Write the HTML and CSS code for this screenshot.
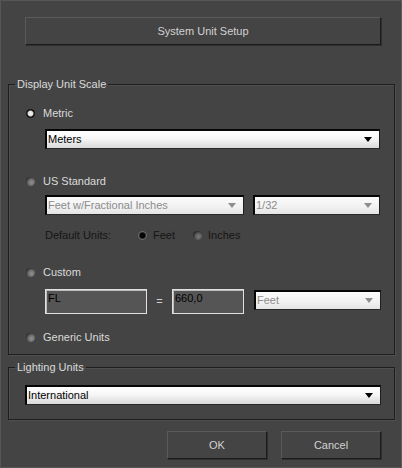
FILE: index.html
```html
<!DOCTYPE html>
<html lang="en">
<head>
  <meta charset="UTF-8" />
  <title>Units Setup</title>
  <link rel="stylesheet" href="styles.css">
</head>
<body>
  <div class="dialog">
    <button class="btn title-btn">System Unit Setup</button>

    <fieldset class="group scale-group">
      <legend>Display Unit Scale</legend>

      <label class="radio-row first">
        <span class="radio checked"></span>Metric
      </label>
      <div class="combo wide-combo"><span>Meters</span></div>

      <label class="radio-row us-row">
        <span class="radio"></span>US Standard
      </label>
      <div class="combo-row">
        <div class="combo disabled feet-combo"><span>Feet w/Fractional Inches</span></div>
        <div class="combo disabled frac-combo"><span>1/32</span></div>
      </div>
      <div class="default-units">
        <span class="default-label">Default Units:</span>
        <label class="sub-radio"><span class="radio dark checked"></span>Feet</label>
        <label class="sub-radio"><span class="radio dark"></span>Inches</label>
      </div>

      <label class="radio-row custom-row">
        <span class="radio"></span>Custom
      </label>
      <div class="custom-inputs">
        <div class="field name-field">FL</div>
        <span class="equals">=</span>
        <div class="field value-field">660,0</div>
        <div class="combo disabled unit-combo"><span>Feet</span></div>
      </div>

      <label class="radio-row generic-row">
        <span class="radio"></span>Generic Units
      </label>
    </fieldset>

    <fieldset class="group light-group">
      <legend>Lighting Units</legend>
      <div class="combo light-combo"><span>International</span></div>
    </fieldset>

    <div class="actions">
      <button class="btn">OK</button>
      <button class="btn">Cancel</button>
    </div>
  </div>
</body>
</html>
```

FILE: styles.css
```css
*, *::before, *::after { box-sizing: border-box; }
* {
  margin: 0;
  padding: 0;
  font-family: "Liberation Sans", Arial, sans-serif;
  font-size: 11px;
}

body {
  background: #444444;
  width: 402px;
  height: 468px;
  overflow: hidden;
}

.dialog {
  width: 402px;
  height: 468px;
  background: #444444;
  border: 1px solid #565656;
  border-right-color: #5c5c5c;
  display: flex;
  flex-direction: column;
}

/* raised 3ds-style buttons */
.btn {
  background: #444444;
  color: #d2d2d2;
  border: 1px solid #1c1c1c;
  border-top-color: #5a5a5a;
  border-left-color: #5a5a5a;
  box-shadow: 1px 1px 0 #2e2e2e;
  height: 28px;
  width: 100px;
  line-height: 26px;
  text-align: center;
}

.title-btn {
  width: 356px;
  margin: 16px 0 0 24px;
}

/* group boxes */
.group {
  border: 1px solid #1e1e1e;
  box-shadow: inset 1px 1px 0 #4f4f4f, 1px 1px 0 #4f4f4f;
  margin-left: 7px;
  width: 387px;
  display: flex;
  flex-direction: column;
  align-items: flex-start;
}

.group legend {
  margin-left: 6px;
  padding: 0 2px;
  line-height: 14px;
  color: #dadada;
}

.scale-group {
  margin-top: 32px;
  height: 278px;
}

.light-group {
  margin-top: 5px;
  height: 60px;
}

/* radio buttons */
.radio-row {
  display: flex;
  align-items: center;
  height: 14px;
  color: #dadada;
  margin-left: 17px;
}

.radio {
  display: inline-block;
  width: 9px;
  height: 9px;
  border-radius: 50%;
  margin-right: 8px;
  background: radial-gradient(circle at 62% 62%, #909090 0, #727272 38%, #555 55%, #111 85%);
}

.radio.checked {
  background: radial-gradient(circle, #f4f4f4 0, #dcdcdc 38%, #111 55%, #111 100%);
}

.radio.dark {
  background: radial-gradient(circle at 62% 62%, #7c7c7c 0, #5e5e5e 38%, #444 55%, #111 85%);
}

.radio.dark.checked {
  background: radial-gradient(circle, #050505 0, #050505 40%, #6c6c6c 62%, #222 100%);
}

.first { margin-top: 15px; }
.us-row { margin-top: 25px; }
.custom-row { margin-top: 23px; }
.generic-row { margin-top: 16px; }

/* drop-down lists */
.combo {
  position: relative;
  height: 20px;
  background: linear-gradient(#ffffff 0, #f6f6f6 45%, #d9d9d9 100%);
  border-top: 2px solid #060606;
  border-left: 2px solid #060606;
  border-right: 1px solid #1e1e1e;
  border-bottom: 1px solid #2a2a2a;
  color: #000;
  padding-left: 1px;
  line-height: 17px;
}

.combo::after {
  content: "";
  position: absolute;
  right: 7px;
  top: 6px;
  border-left: 4px solid transparent;
  border-right: 4px solid transparent;
  border-top: 5px solid #000;
}

.combo.disabled {
  background: linear-gradient(#fbfbfb 0, #f1f1f1 60%, #e4e4e4 100%);
  color: #8c8c8c;
}

.combo.disabled::after { border-top-color: #8e8e8e; }

.wide-combo {
  width: 335px;
  margin: 9px 0 0 36px;
}

.combo-row {
  display: flex;
  gap: 9px;
  margin: 7px 0 0 36px;
}

.feet-combo { width: 199px; }
.frac-combo { width: 127px; }

.default-units {
  display: flex;
  align-items: center;
  height: 14px;
  margin: 13px 0 0 36px;
  color: #151515;
}

.default-label { width: 93px; color: #151515; }

.sub-radio {
  display: flex;
  align-items: center;
  color: #151515;
  margin-right: 18px;
}

.sub-radio .radio { margin-right: 6px; }

/* custom unit inputs */
.custom-inputs {
  display: flex;
  align-items: flex-start;
  margin: 10px 0 0 36px;
}

.field {
  height: 25px;
  background: #555555;
  border: 1px solid #e0e0e0;
  box-shadow: inset 1px 1px 0 #bdbdbd;
  color: #000;
  padding: 2px 0 0 2px;
  line-height: 13px;
}

.name-field { width: 102px; }
.value-field { width: 72px; }

.equals {
  width: 25px;
  text-align: center;
  color: #d0d0d0;
  line-height: 24px;
}

.unit-combo {
  width: 127px;
  margin: 1px 0 0 10px;
}

.light-combo {
  width: 356px;
  margin: 11px 0 0 16px;
}

.actions {
  display: flex;
  gap: 14px;
  margin: 11px 0 0 166px;
}
```
